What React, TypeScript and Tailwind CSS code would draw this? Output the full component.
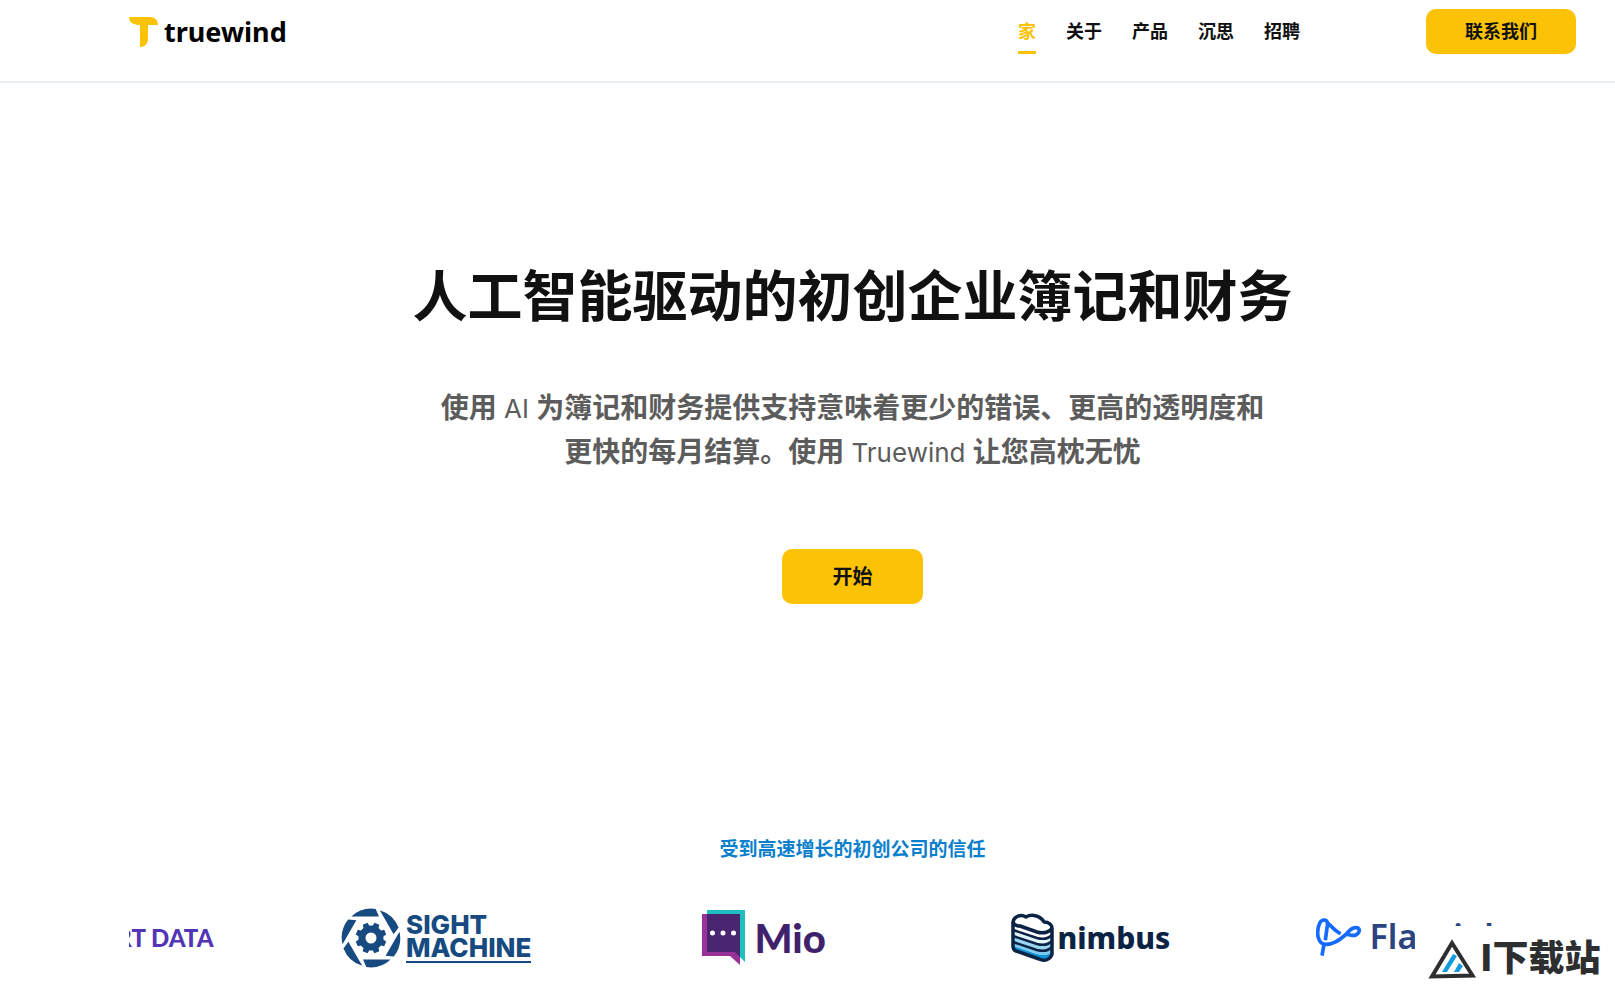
import type { ReactNode } from 'react';

const navItems = [
  { label: '家', href: '#home', active: true },
  { label: '关于', href: '#about', active: false },
  { label: '产品', href: '#product', active: false },
  { label: '沉思', href: '#musings', active: false },
  { label: '招聘', href: '#careers', active: false },
];

function TruewindLogo() {
  return (
    <a href="#home" className="flex items-center gap-[5px] text-black">
      <svg width="30" height="31" viewBox="0 0 30 31" aria-hidden="true">
        <path d="M0 0H20C26 0 29 3 29 8H19V21C19 27 16 30 11 30V8C5 8 0 6 0 0Z" fill="#fcc306" />
      </svg>
      <span className="font-['Noto_Sans','Open_Sans',sans-serif] text-[27px] leading-[32px] font-bold">truewind</span>
    </a>
  );
}

function Header() {
  return (
    <header className="flex items-start border-b-2 border-[#e9eef2] pt-[9px] pr-[39px] pb-[27px] pl-[129px]">
      <div className="pt-[7px]">
        <TruewindLogo />
      </div>
      <nav className="ml-auto flex gap-[30px]">
        {navItems.map((item) => (
          <a
            key={item.label}
            href={item.href}
            className={
              item.active
                ? 'border-y-[3px] border-t-transparent border-b-[#fcc306] text-[18px] leading-[39px] font-bold text-[#fcc306]'
                : 'border-y-[3px] border-transparent text-[18px] leading-[39px] font-bold text-[#111111]'
            }
          >
            {item.label}
          </a>
        ))}
      </nav>
      <button
        type="button"
        className="ml-[126px] h-[45px] w-[150px] rounded-[10px] bg-[#fcc306] text-[18px] leading-[27px] font-bold text-[#111111]"
      >
        联系我们
      </button>
    </header>
  );
}

function Slide({ children }: { children: ReactNode }) {
  return <li className="flex h-[76px] w-[325px] shrink-0 items-center justify-center">{children}</li>;
}

const sixths = [0, 60, 120, 180, 240, 300];
const teeth = [22.5, 67.5, 112.5, 157.5, 202.5, 247.5, 292.5, 337.5];

function DataLogo() {
  return (
    <div className="flex w-[200px] justify-end font-['Lato',sans-serif] text-[24px] leading-[28px] font-black whitespace-pre text-[#5135b5]">
      RT DATA
    </div>
  );
}

function SightMachineLogo() {
  return (
    <div className="flex w-[195px] items-center gap-[5px] text-[#164a80]">
      <svg width="60" height="60" viewBox="-30 -30 60 60" className="shrink-0" fill="currentColor" aria-hidden="true">
        {sixths.map((a) => (
          <path key={a} d="M-19.7 -21.5A29.5 29.5 0 0 1 4.7 -29.1L8 -21.5Z" transform={`rotate(${a})`} />
        ))}
        {teeth.map((a) => (
          <path key={a} d="M-3.6 -9L-2.6 -15.4H2.6L3.6 -9Z" transform={`rotate(${a})`} />
        ))}
        <circle r="9" fill="none" stroke="currentColor" strokeWidth="7" />
      </svg>
      <div className="border-b-2 border-[#164a80] pb-[2px] font-['Inter',sans-serif] text-[26px] leading-[23px] font-extrabold">
        <div>SIGHT</div>
        <div>MACHINE</div>
      </div>
    </div>
  );
}

function MioLogo() {
  return (
    <div className="flex w-[124px] items-center gap-[10px]">
      <svg width="43" height="56" viewBox="0 0 43 56" className="shrink-0" aria-hidden="true">
        <path d="M5 0H43V52L33 42H5Z" fill="#1fbfc0" />
        <path d="M0 4H38V55L28 46H0Z" fill="#983299" />
        <path d="M5 4H38V47L33 42H5Z" fill="#4a2670" />
        <g fill="#ffffff">
          <circle cx="10.500" cy="23" r="2.500" />
          <circle cx="21" cy="23" r="2.500" />
          <circle cx="31.500" cy="23" r="2.500" />
        </g>
      </svg>
      <span className="font-['Lato',sans-serif] text-[40px] leading-[48px] font-black text-[#40216b]">Mio</span>
    </div>
  );
}

function NimbusLogo() {
  return (
    <div className="flex w-[156px] items-center gap-[4px]">
      <svg width="43" height="50" viewBox="0 0 43 50" className="shrink-0" aria-hidden="true">
        <path
          d="M2 9C3 3 10 1 15 4C20 1 29 2 33 8C38 8 41 11 41 14V41C40 46 34 49 28 46L5 38C2 37 2 35 2 33Z"
          fill="#ffffff"
        />
        <path d="M2 17L26 25C33 27 38 26 41 22V28C38 31 32 32 27 30L2 22Z" fill="#e2f3fb" />
        <path d="M2 22L26 30C33 32 38 31 41 27V34C38 37 32 38 27 36L2 28Z" fill="#9ad6f2" />
        <path d="M2 28L26 36C33 38 38 37 41 33V39C38 42 32 43 27 41L2 33Z" fill="#7dcaee" />
        <path d="M2 33L26 41C33 43 38 42 41 39V41C40 46 34 49 28 46L5 38C2 37 2 35 2 33Z" fill="#0d95d8" />
        <g fill="none" stroke="#0b2344" strokeWidth="3.500" strokeLinejoin="round">
          <path d="M2 9C3 3 10 1 15 4C20 1 29 2 33 9C38 9 41 12 41 15V41C40 46 34 49 28 46L5 38C2 37 2 35 2 33Z" />
          <path d="M2 9C3 12 6 13 9 13L26 19C33 21 39 19 41 15" />
          <path d="M2 17L26 25C33 27 38 25 41 22" strokeWidth="2.500" />
          <path d="M2 23L26 31C33 33 38 31 41 28" strokeWidth="2.500" />
          <path d="M2 29L26 37C33 39 38 37 41 34" strokeWidth="2.500" />
        </g>
      </svg>
      <span className="font-['Noto_Sans',sans-serif] text-[30px] leading-[36px] font-extrabold text-[#0b2344]">nimbus</span>
    </div>
  );
}

function FlagrightLogo() {
  return (
    <div className="flex w-[196px] items-center gap-[8px]">
      <svg width="46" height="40" viewBox="47 83 138 120" className="shrink-0" aria-hidden="true">
        <g fill="none" stroke="#156bff" strokeWidth="11" strokeLinejoin="round">
          <path d="M65 196L71 162C52 156 48 128 56 104C61 86 79 84 82 99L75 150" />
          <path d="M80 98C92 104 102 122 121 130" />
          <path d="M70 162C98 165 118 148 135 134C146 122 154 111 168 112C182 113 178 128 166 134C154 139 144 128 132 134" />
        </g>
      </svg>
      <span className="pb-1 font-['Noto_Sans',sans-serif] text-[34px] leading-[40px] font-semibold text-[#2b437f]">
        Flagright
      </span>
    </div>
  );
}

function Watermark() {
  return (
    <div className="absolute right-0 bottom-0 flex h-[62px] w-[200px] items-start gap-[3px] bg-white pt-[12px] pl-[13px]">
      <svg width="49" height="42" viewBox="0 0 49 42" className="shrink-0" aria-hidden="true">
        <path d="M24 5L44.500 37.500L4 38.500Z" fill="none" stroke="#2d2e30" strokeWidth="4" />
        <path d="M14 34L25 16L29 18L19 34ZM26 34L31 25L35 28L31 34Z" fill="#129be0" />
      </svg>
      <span className="font-['Noto_Sans_CJK_SC',sans-serif] text-[36px] leading-[34px] font-black whitespace-nowrap text-[#2d2e30]">
        I下载站
      </span>
    </div>
  );
}

export default function App() {
  return (
    <div className="relative min-h-screen bg-white font-['Inter','Noto_Sans_CJK_SC',sans-serif]" lang="zh-CN">
      <Header />
      <main className="pt-[180px] pr-[39px] pb-3 pl-[129px]">
        <section className="flex flex-col items-center text-center">
          <h1 className="text-[55px] leading-[66px] font-bold text-[#111111]">人工智能驱动的初创企业簿记和财务</h1>
          <p className="mt-[57px] max-w-[835px] text-[28px] leading-[44px] font-bold text-[#5c5c5c]">
            使用<span className="text-[26px] leading-none font-normal"> AI </span>
            为簿记和财务提供支持意味着更少的错误、更高的透明度和更快的每月结算。使用
            <span className="text-[26px] leading-none font-normal"> Truewind </span>让您高枕无忧
          </p>
          <button
            type="button"
            className="mt-[75px] h-[55px] w-[141px] rounded-[10px] bg-[#fcc306] text-[20px] leading-[30px] font-bold text-[#111111]"
          >
            开始
          </button>
        </section>
        <section className="mt-[232px]">
          <h2 className="text-center text-[19px] leading-[28px] font-bold text-[#0a80cc]">受到高速增长的初创公司的信任</h2>
          <ul className="mt-[36px] flex justify-end overflow-hidden">
            <Slide>
              <DataLogo />
            </Slide>
            <Slide>
              <SightMachineLogo />
            </Slide>
            <Slide>
              <MioLogo />
            </Slide>
            <Slide>
              <NimbusLogo />
            </Slide>
            <Slide>
              <FlagrightLogo />
            </Slide>
          </ul>
        </section>
      </main>
      <Watermark />
    </div>
  );
}
